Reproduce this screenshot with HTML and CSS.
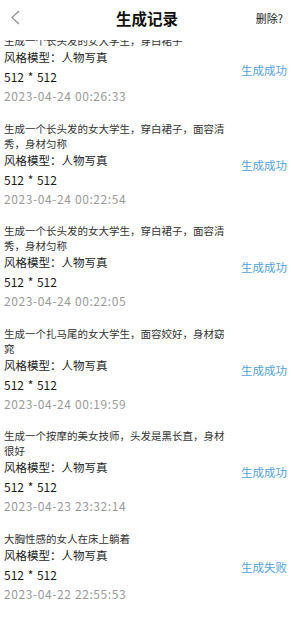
FILE: index.html
```html
<!DOCTYPE html>
<html lang="zh-CN">
<head>
<meta charset="utf-8">
<title>生成记录</title>
<link rel="stylesheet" href="styles.css">
</head>
<body>
<div class="page">
  <header class="header">
    <span class="back">
      <svg width="10" height="16" viewBox="0 0 10 16"><polyline points="8,1 1,7.5 8,14" fill="none" stroke="#8a8a8a" stroke-width="1.1"/></svg>
    </span>
    <h1 class="title">生成记录</h1>
    <span class="del">删除?</span>
  </header>
  <div class="viewport">
    <ul class="list">
      <li class="item">
        <div class="info">
          <p class="prompt">生成一个长头发的女大学生，穿白裙子</p>
          <p class="meta">风格模型：人物写真</p>
          <p class="meta size">512 * 512</p>
          <p class="date">2023-04-24 00:26:33</p>
        </div>
        <span class="status">生成成功</span>
      </li>
      <li class="item">
        <div class="info">
          <p class="prompt">生成一个长头发的女大学生，穿白裙子，面容清秀，身材匀称</p>
          <p class="meta">风格模型：人物写真</p>
          <p class="meta size">512 * 512</p>
          <p class="date">2023-04-24 00:22:54</p>
        </div>
        <span class="status">生成成功</span>
      </li>
      <li class="item">
        <div class="info">
          <p class="prompt">生成一个长头发的女大学生，穿白裙子，面容清秀，身材匀称</p>
          <p class="meta">风格模型：人物写真</p>
          <p class="meta size">512 * 512</p>
          <p class="date">2023-04-24 00:22:05</p>
        </div>
        <span class="status">生成成功</span>
      </li>
      <li class="item">
        <div class="info">
          <p class="prompt">生成一个扎马尾的女大学生，面容姣好，身材窈窕</p>
          <p class="meta">风格模型：人物写真</p>
          <p class="meta size">512 * 512</p>
          <p class="date">2023-04-24 00:19:59</p>
        </div>
        <span class="status">生成成功</span>
      </li>
      <li class="item">
        <div class="info">
          <p class="prompt">生成一个按摩的美女技师，头发是黑长直，身材很好</p>
          <p class="meta">风格模型：人物写真</p>
          <p class="meta size">512 * 512</p>
          <p class="date">2023-04-23 23:32:14</p>
        </div>
        <span class="status">生成成功</span>
      </li>
      <li class="item">
        <div class="info">
          <p class="prompt">大胸性感的女人在床上躺着</p>
          <p class="meta">风格模型：人物写真</p>
          <p class="meta size">512 * 512</p>
          <p class="date">2023-04-22 22:55:53</p>
        </div>
        <span class="status">生成失败</span>
      </li>
    </ul>
  </div>
</div>
</body>
</html>
```

FILE: styles.css
```css
* { box-sizing: border-box; }
html, body { margin: 0; padding: 0; background: #fff; }
body {
  font-family: "Noto Sans CJK SC", "Noto Sans", sans-serif;
  color: #222;
}
.page {
  width: 291px;
  height: 617px;
  display: flex;
  flex-direction: column;
  overflow: hidden;
}
.header {
  height: 40px;
  flex: none;
  display: flex;
  align-items: center;
  justify-content: space-between;
  padding: 0 8px 5px 11px;
  background: #fff;
  position: relative;
}
.back { width: 40px; display: flex; align-items: center; }
.back svg { display: block; }
.title {
  margin: 0;
  font-size: 15.5px;
  font-weight: 700;
  color: #111;
}
.del {
  width: 40px;
  text-align: right;
  font-size: 11px;
  color: #222;
}
.viewport { flex: 1; overflow: hidden; }
.list {
  list-style: none;
  margin: -7px 0 0;
  padding: 0;
}
.item {
  display: flex;
  align-items: center;
  justify-content: space-between;
  padding: 0 4px 14.5px 4px;
}
.info { width: 226px; }
.info p { margin: 0; }
.prompt {
  font-size: 10.5px;
  line-height: 15px;
  color: #333;
}
.meta {
  font-size: 11.5px;
  line-height: 19px;
  color: #1a1a1a;
}
.size { font-size: 12px; word-spacing: 1px; }
.date {
  font-size: 12px;
  line-height: 20px;
  color: #9a9a9a;
  letter-spacing: 0.6px;
}
.status {
  font-size: 11.5px;
  color: #4fa2de;
  white-space: nowrap;
}
```
